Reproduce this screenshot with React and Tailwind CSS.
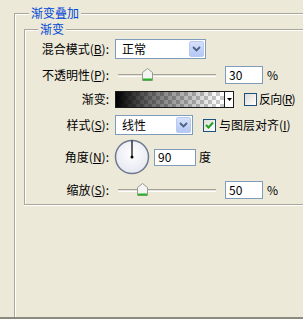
import React from 'react';

const font = { fontFamily: '"Noto Sans CJK SC", "Noto Sans", sans-serif' };

function Label({ children }) {
  return <div className="w-[85px] shrink-0 text-right pr-[1px]">{children}</div>;
}

function DropButton() {
  return (
    <div className="w-[15px] h-[16px] rounded-[2px] border border-[#b8c9f3] bg-[linear-gradient(#d6e1fb,#b4c8f5)] flex items-center justify-center">
      <svg width="9" height="6" viewBox="0 0 9 6">
        <polyline points="1,1 4.5,4.5 8,1" fill="none" stroke="#4d6185" strokeWidth="1.8" />
      </svg>
    </div>
  );
}

function Select({ value, width }) {
  return (
    <div className={`${width} h-[20px] border border-[#7f9db9] bg-white flex items-center justify-between pl-[6px] pr-[1px]`}>
      <span>{value}</span>
      <DropButton />
    </div>
  );
}

function Thumb() {
  return (
    <svg width="11" height="13" viewBox="0 0 11 13">
      <polygon points="0.5,4.5 5.5,0.5 10.5,4.5 10.5,12.5 0.5,12.5" fill="#f4f4f2" stroke="#9a9a94" />
      <line x1="1" y1="11.5" x2="10" y2="11.5" stroke="#27b427" strokeWidth="2" />
    </svg>
  );
}

function Slider({ pos }) {
  return (
    <div className="relative ml-[3px] w-[98px] h-[18px] flex items-center">
      <div className="w-full h-[3px] border-t border-[#a6a396] bg-[#e5e3d8] border-b border-b-white" />
      <div className={`absolute ${pos} top-[2px]`}>
        <Thumb />
      </div>
    </div>
  );
}

function NumBox({ value, className }) {
  return (
    <div className={`${className} border border-[#7f9db9] bg-white pl-[3px] flex items-center`}>{value}</div>
  );
}

function Check({ checked }) {
  return (
    <div className="w-[13px] h-[13px] border border-[#1c5180] bg-[linear-gradient(135deg,#dcdbd5,#fff)] flex items-center justify-center">
      {checked && (
        <svg width="9" height="9" viewBox="0 0 9 9">
          <polyline points="1,4 3.5,6.5 8,1.5" fill="none" stroke="#21a121" strokeWidth="2" />
        </svg>
      )}
    </div>
  );
}

export default function App() {
  return (
    <div
      className="w-[303px] h-[319px] overflow-hidden bg-[#ece9d8] border-b-2 border-[#8c8a7e] text-[12px] leading-[16px] text-black"
      style={font}
    >
      <div className="relative ml-[14px] mt-[13px] w-[400px] h-[400px] border-t border-l border-[#aca899] shadow-[inset_1px_1px_0_#fff]">
        <span className="absolute left-[14px] top-[-9px] px-[2px] bg-[#ece9d8] text-[#0046d5]">渐变叠加</span>

        <div className="relative ml-[9px] mt-[15px] w-[400px] h-[176px] border-t border-l border-b border-[#aca899] shadow-[inset_1px_1px_0_#fff,0_1px_0_#fff]">
          <span className="absolute left-[13px] top-[-9px] px-[2px] bg-[#ece9d8] text-[#0046d5]">渐变</span>

          <div className="flex flex-col">
            <div className="mt-[9px] h-[20px] flex items-center">
              <Label>混合模式(<u>B</u>):</Label>
              <div className="ml-[5px]">
                <Select value="正常" width="w-[91px]" />
              </div>
            </div>

            <div className="mt-[7px] h-[18px] flex items-center">
              <Label>不透明性(<u>P</u>):</Label>
              <div className="ml-[5px] flex items-center">
                <Slider pos="left-[24px]" />
                <NumBox value="30" className="ml-[9px] w-[38px] h-[18px]" />
                <span className="ml-[4px]">%</span>
              </div>
            </div>

            <div className="mt-[6px] h-[18px] flex items-center">
              <Label>渐变:</Label>
              <div className="ml-[5px] flex items-center">
                <div className="w-[119px] h-[17px] border border-[#1a1a1a] flex">
                  <div className="flex-1 bg-[linear-gradient(to_right,#000_0%,rgba(0,0,0,0.6)_30%,rgba(0,0,0,0)_95%),repeating-conic-gradient(#c9c9c9_0_25%,#fff_0_50%)] [background-size:100%_100%,8px_8px]" />
                  <div className="w-[9px] border-l border-[#1a1a1a] bg-white flex items-center justify-center">
                    <svg width="5" height="3" viewBox="0 0 5 3">
                      <polygon points="0,0 5,0 2.5,3" fill="#000" />
                    </svg>
                  </div>
                </div>
                <div className="ml-[10px]">
                  <Check />
                </div>
                <span className="ml-[2px] whitespace-nowrap tracking-[-0.8px]">反向(<u>R</u>)</span>
              </div>
            </div>

            <div className="mt-[7px] h-[20px] flex items-center">
              <Label>样式(<u>S</u>):</Label>
              <div className="ml-[5px] flex items-center">
                <Select value="线性" width="w-[78px]" />
                <div className="ml-[10px]">
                  <Check checked />
                </div>
                <span className="ml-[3px] whitespace-nowrap">与图层对齐(<u>I</u>)</span>
              </div>
            </div>

            <div className="mt-[5px] h-[34px] flex items-center">
              <Label>角度(<u>N</u>):</Label>
              <div className="ml-[4px] flex items-center">
                <svg width="36" height="36" viewBox="0 0 36 36">
                  <defs>
                    <radialGradient id="dial" cx="50%" cy="40%" r="60%">
                      <stop offset="0%" stopColor="#ffffff" />
                      <stop offset="100%" stopColor="#e6e8f0" />
                    </radialGradient>
                  </defs>
                  <circle cx="18" cy="18" r="16.5" fill="url(#dial)" stroke="#6e7a90" strokeWidth="1.5" />
                  <line x1="18" y1="18" x2="18" y2="1.5" stroke="#000" strokeWidth="1.2" />
                  <circle cx="18" cy="18" r="1.5" fill="#000" />
                </svg>
                <NumBox value="90" className="ml-[4px] w-[42px] h-[17px]" />
                <span className="ml-[3px]">度</span>
              </div>
            </div>

            <div className="mt-[7px] h-[18px] flex items-center">
              <Label>缩放(<u>S</u>):</Label>
              <div className="ml-[5px] flex items-center">
                <Slider pos="left-[19px]" />
                <NumBox value="50" className="ml-[9px] w-[38px] h-[18px]" />
                <span className="ml-[4px]">%</span>
              </div>
            </div>
          </div>
        </div>
      </div>
    </div>
  );
}
